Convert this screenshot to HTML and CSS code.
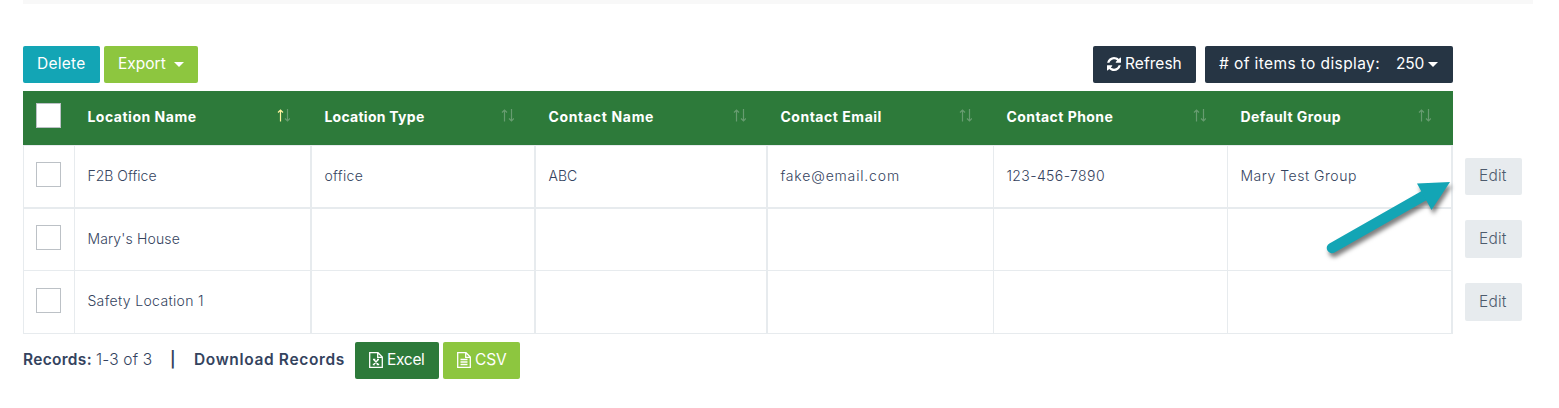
FILE: index.html
```html
<!DOCTYPE html>
<html lang="en">
<head>
<meta charset="utf-8">
<title>Locations</title>
<link rel="stylesheet" href="styles.css">
</head>
<body>
<svg class="defs" width="0" height="0">
  <symbol id="sort" viewBox="0 0 13 13">
    <path class="up" d="M3.5 12.500V1.5M1 3.5L3.5 1L6 3.5"/>
    <path class="down" d="M10.500 0V11.5M8 9.5L10.500 12L13 9.500"/>
  </symbol>
</svg>
<main class="page">
  <div class="strip"></div>
  <div class="toolbar">
    <button class="btn teal"><span class="t-delete">Delete</span></button>
    <button class="btn lime export"><span class="t-export">Export</span><i class="caret"></i></button>
    <button class="btn navy refresh">
      <svg class="sync" viewBox="0 0 1536 1536"><path d="M1511 928q0 5-1 7-64 268-268 434.500T764 1536q-146 0-282.500-55T238 1324l-129 129q-19 19-45 19t-45-19-19-45V960q0-26 19-45t45-19h448q26 0 45 19t19 45-19 45l-137 137q71 66 161 102t187 36q134 0 250-65t186-179q11-17 53-117 8-23 30-23h192q13 0 22.500 9.500t9.500 22.500zm25-800v448q0 26-19 45t-45 19h-448q-26 0-45-19t-19-45 19-45l138-138Q969 256 768 256q-134 0-250 65T332 500q-11 17-53 117-8 23-30 23H50q-13 0-22.500-9.500T18 608v-7q65-268 270-434.500T768 0q146 0 284 55.500T1297 212l130-129q19-19 45-19t45 19 19 45z"/></svg>
      <span class="t-refresh">Refresh</span></button>
    <button class="btn navy items"><span class="t-items"># of items to display:</span><span class="t-count">250</span><i class="caret"></i></button>
  </div>
  <div class="grid">
    <div class="row head">
      <div class="cell check"><i class="box"></i></div>
      <div class="cell sorted"><span class="h1">Location Name</span><svg class="sort"><use href="#sort"/></svg></div>
      <div class="cell"><span class="h2">Location Type</span><svg class="sort"><use href="#sort"/></svg></div>
      <div class="cell"><span class="h3">Contact Name</span><svg class="sort"><use href="#sort"/></svg></div>
      <div class="cell"><span class="h4">Contact Email</span><svg class="sort"><use href="#sort"/></svg></div>
      <div class="cell"><span class="h5">Contact Phone</span><svg class="sort"><use href="#sort"/></svg></div>
      <div class="cell"><span class="h6">Default Group</span><svg class="sort"><use href="#sort"/></svg></div>
    </div>
    <div class="row first">
      <div class="cell check"><i class="box"></i></div>
      <div class="cell"><span class="c1">F2B Office</span></div>
      <div class="cell"><span class="c2">office</span></div>
      <div class="cell"><span class="c3">ABC</span></div>
      <div class="cell"><span class="c4">fake@email.com</span></div>
      <div class="cell"><span class="c5">123-456-7890</span></div>
      <div class="cell"><span class="c6">Mary Test Group</span></div>
      <div class="action"><button class="btn edit"><span class="t-edit">Edit</span></button></div>
    </div>
    <div class="row second">
      <div class="cell check"><i class="box"></i></div>
      <div class="cell"><span class="c7">Mary's House</span></div>
      <div class="cell"></div><div class="cell"></div><div class="cell"></div><div class="cell"></div><div class="cell"></div>
      <div class="action"><button class="btn edit"><span class="t-edit">Edit</span></button></div>
    </div>
    <div class="row third">
      <div class="cell check"><i class="box"></i></div>
      <div class="cell"><span class="c8">Safety Location 1</span></div>
      <div class="cell"></div><div class="cell"></div><div class="cell"></div><div class="cell"></div><div class="cell"></div>
      <div class="action"><button class="btn edit"><span class="t-edit">Edit</span></button></div>
    </div>
  </div>
  <div class="footer">
    <b class="t-records">Records:</b><span class="t-range">1-3 of 3</span><b class="bar">|</b><b class="t-download">Download Records</b>
    <button class="btn green"><svg class="file" viewBox="0 0 14 16"><path d="M.7.7H9L13.300 5V15.300H.7ZM8.700.7V5.300H13.300"/><path d="M4 7.500H6.300M8 7.500H10M4.800 7.500L9.200 12.500M9.200 7.500L4.800 12.500M3.800 12.500H6M7.700 12.500H10.200"/></svg><span class="t-excel">Excel</span></button>
    <button class="btn lime"><svg class="file" viewBox="0 0 14 16"><path d="M.7.7H9L13.300 5V15.300H.7ZM8.700.7V5.300H13.300"/><path d="M3.500 7.500H10.500M3.500 10H10.500M3.500 12.500H10.500"/></svg><span class="t-csv">CSV</span></button>
  </div>
  <svg class="arrow" viewBox="0 0 140 90"><path d="M13 68L107 14.500"/><polygon points="98,3.500 131,2 112.500,30"/></svg>
</main>
</body>
</html>
```
FILE: styles.css
```css
* { box-sizing: border-box; }
body { margin: 0; background: #fff; color: #34435e; font: 300 14px/20px Inter, "Open Sans", sans-serif; }
.defs { position: absolute; }
.page { position: relative; width: 1559px; height: 408px; padding-left: 23px; overflow: hidden; }
.strip { width: 1510px; height: 4px; margin-bottom: 42px; background: #f8f8f8; }
.toolbar { display: flex; width: 1430px; height: 45px; align-items: flex-start; }
.btn { display: flex; align-items: center; height: 37px; padding: 0 14px; border: 0; border-radius: 2px; color: #fff; font: 400 15.5px/22px Inter, sans-serif; white-space: nowrap; }
span, b { white-space: nowrap; flex: none; text-align: left; padding-bottom: 2px; }
.teal { width: 77px; background: #13a5b5; }
.lime { background: #8dc63f; }
.navy { background: #263544; }
.green { background: #2d7a3a; }
.export { width: 94px; margin-left: 4px; justify-content: space-between; }
.refresh { width: 103px; margin-left: auto; gap: 4px; }
.items { width: 248px; margin-left: 9px; }
.t-delete { letter-spacing: .25px; }
.t-refresh { letter-spacing: .05px; }
.t-items { width: 161px; margin-right: 16px; letter-spacing: .4px; }
.t-count { width: 28px; margin-right: 4px; letter-spacing: -.2px; }
.t-edit { letter-spacing: .2px; }
.t-excel { letter-spacing: -.3px; }
.t-csv { letter-spacing: -.1px; }
.caret { border: 5px solid transparent; border-top-color: #fff; border-bottom: 0; }
.sync { width: 14px; height: 14px; margin-bottom: 2px; fill: #fff; flex: none; }
.row { display: grid; grid-template-columns: 52px 237px 224px 232px 226px 234px 225px 69px; width: 1499px; }
.head { height: 54px; width: 1430px; grid-template-columns: 52px 237px 224px 232px 226px 234px 225px; background: #2d7a3a; color: #fff; font-weight: 700; }
.cell { display: flex; align-items: center; justify-content: space-between; padding: 0 20px 0 12.4px; border-right: 2px solid #e7ebee; border-bottom: 1px solid #e7ebee; }
.head .cell { border: 0; }
.check { padding: 0 0 0 12px; border-left: 1px solid #e7ebee; border-right-width: 1px; }
.head .check { padding: 0 0 5px 13px; }
.cell:nth-child(5), .cell:nth-child(6) { border-right-width: 1px; }
.first { height: 64px; }
.first .cell { border-top: 1px solid #e7ebee; border-bottom-width: 2px; }
.second { height: 62px; }
.third { height: 63px; }
.box { width: 25px; height: 25px; background: #fff; border: 1px solid #bcc1c6; }
.first .box, .second .box { margin-bottom: 5px; }
.third .box { margin-bottom: 4px; }
.h1 { letter-spacing: .52px; }
.h2 { letter-spacing: .27px; }
.h3 { letter-spacing: .68px; }
.h4 { letter-spacing: .53px; }
.h5 { letter-spacing: .45px; }
.h6 { letter-spacing: .42px; }
.c1 { letter-spacing: .03px; }
.c2 { letter-spacing: .35px; }
.c3 { letter-spacing: .1px; }
.c4 { letter-spacing: .83px; }
.c5 { letter-spacing: .4px; }
.c6 { letter-spacing: .52px; }
.c7 { letter-spacing: .14px; }
.c8 { letter-spacing: .35px; }
.sort { width: 13px; height: 13px; margin: 0 2.5px 5px 0; fill: none; stroke: #679c70; stroke-width: 1.2; flex: none; overflow: visible; }
.sorted .sort { --up: #fff3a0; }
.up { stroke: var(--up, #679c70); }
.action { display: flex; align-items: flex-start; justify-content: flex-end; padding-top: 13px; }
.edit { width: 57px; height: 37px; background: #e7ebee; color: #4d5b6d; font-weight: 300; }
.second .action { padding-top: 11px; }
.third .action { padding-top: 12px; }
.second .edit, .third .edit { height: 38px; }
.second .t-edit, .third .t-edit { padding-bottom: 0; }
.footer { display: flex; align-items: center; height: 37px; margin-top: 8px; font-size: 15.5px; }
.footer b { font-weight: 600; }
.t-records { width: 73px; letter-spacing: .3px; }
.t-range { width: 74px; letter-spacing: .15px; }
.bar { width: 24px; }
.t-download { width: 151px; letter-spacing: .65px; }
.green, .footer .lime { gap: 4px; }
.green { width: 84px; margin-left: 10px; }
.footer .lime { width: 77px; margin-left: 4px; }
.file { width: 14px; height: 16px; margin-bottom: 2px; fill: none; stroke: #fff; stroke-width: 1.3; flex: none; }
.arrow { position: absolute; left: 1319px; top: 180px; width: 140px; height: 90px; fill: #13a5b5; filter: drop-shadow(2px 4px 2px rgba(0,0,0,.5)); }
.arrow path { stroke: #13a5b5; stroke-width: 10.5; stroke-linecap: round; }
```
